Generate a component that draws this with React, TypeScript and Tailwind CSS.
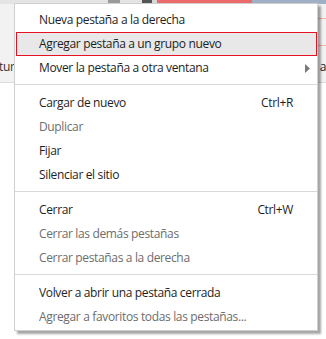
type Item = {
  label: string;
  shortcut?: string;
  disabled?: boolean;
  submenu?: boolean;
  selected?: boolean;
};

const groups: Item[][] = [
  [
    { label: "Nueva pestaña a la derecha" },
    { label: "Agregar pestaña a un grupo nuevo", selected: true },
    { label: "Mover la pestaña a otra ventana", submenu: true },
  ],
  [
    { label: "Cargar de nuevo", shortcut: "Ctrl+R" },
    { label: "Duplicar", disabled: true },
    { label: "Fijar" },
    { label: "Silenciar el sitio" },
  ],
  [
    { label: "Cerrar", shortcut: "Ctrl+W" },
    { label: "Cerrar las demás pestañas", disabled: true },
    { label: "Cerrar pestañas a la derecha", disabled: true },
  ],
  [
    { label: "Volver a abrir una pestaña cerrada" },
    { label: "Agregar a favoritos todas las pestañas...", disabled: true },
  ],
];

function MenuRow({ item }: { item: Item }) {
  return (
    <div
      className={
        "relative flex h-6 items-center pl-6 pr-6 " +
        (item.selected
          ? "ml-px bg-[#e8e8e8] outline outline-[#e81123] -outline-offset-1 pl-[23px]"
          : "")
      }
    >
      <span
        className={
          "flex-1 truncate " +
          (item.disabled ? "text-[#6d6d6d]" : "text-[#1e1e1e]")
        }
      >
        {item.label}
      </span>
      {item.shortcut ? (
        <span className="text-[#1e1e1e]">{item.shortcut}</span>
      ) : null}
      {item.submenu ? (
        <svg
          width="5"
          height="9"
          viewBox="0 0 5 9"
          className="absolute right-[7px] top-[8px]"
        >
          <path d="M0 0 L5 4.5 L0 9 Z" fill="#7a7a7a" />
        </svg>
      ) : null}
    </div>
  );
}

export default function App() {
  return (
    <div
      className="relative h-[339px] w-[326px] overflow-hidden bg-white text-[12px] tracking-[-0.35px]"
      style={{ fontFamily: '"Open Sans", "Noto Sans", sans-serif' }}
    >
      {/* page behind the menu */}
      <div className="flex h-[83px] flex-col border-b border-[#dcdcdc] bg-[#f2f2f2]">
        <div className="flex h-[4px]">
          <div className="w-[108px] bg-[#e4e4e4]" />
          <div className="w-[12px] bg-[#9a9a9a]" />
          <div className="w-[22px] bg-[#e4e4e4]" />
          <div className="w-[10px] bg-[#555]" />
          <div className="w-[5px] bg-[#d8d8d8]" />
          <div className="w-[95px] bg-[#ec6a6a]" />
          <div className="flex-1 bg-[#9fb0c6]" />
        </div>
        <div className="flex flex-1 items-end justify-between pb-[6px] text-[#333]">
          <span className="-ml-px">tur</span>
          <span className="text-[#223]">t a</span>
        </div>
      </div>
      <div className="absolute right-0 top-[18px] h-px w-[8px] bg-[#f3b2a6]" />
      <div className="absolute right-0 top-[45px] h-px w-[8px] bg-[#f3b2a6]" />

      {/* context menu */}
      <div className="absolute left-[14px] top-[3px] w-[304px] border border-[#cfcfcf] bg-white pb-px pt-[4px] shadow-[3px_3px_2px_rgba(0,0,0,0.35)]">
        {groups.map((group, gi) => (
          <div key={gi}>
            {gi > 0 ? (
              <div className="mb-[6px] mt-[4px] h-px bg-[#d9d9d9]" />
            ) : null}
            {group.map((item) => (
              <MenuRow key={item.label} item={item} />
            ))}
          </div>
        ))}
      </div>
    </div>
  );
}
